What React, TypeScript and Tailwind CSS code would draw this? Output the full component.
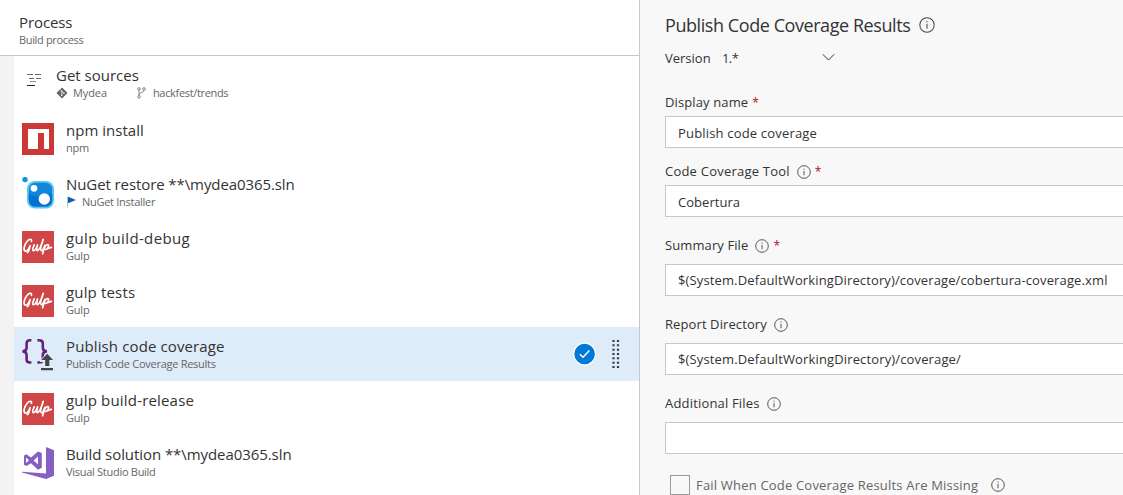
import type { ReactNode } from "react";

function InfoIcon({ size = 14 }: { size?: number }) {
  return (
    <svg width={size} height={size} viewBox="0 0 14 14" fill="none" stroke="#444" strokeWidth="0.9" className="shrink-0">
      <circle cx="7" cy="7" r="6.3" />
      <path d="M7 5.9V10.3M7 3.6V4.7" />
    </svg>
  );
}

function SourcesIcon() {
  return (
    <svg width="16" height="14" viewBox="0 0 16 14" strokeWidth="1">
      <path d="M0 1.5H6M8 1.5H14M2 5.5H7M9 5.5H14" stroke="#6a6a6a" />
      <path d="M3 8.5H9" stroke="#8a8a8a" />
      <path d="M0 12.5H8" stroke="#222" />
    </svg>
  );
}

function GitIcon() {
  return (
    <svg width="12" height="12" viewBox="0 0 12 12" className="shrink-0">
      <rect x="2" y="2" width="8" height="8" rx="0.8" transform="rotate(45 6 6)" fill="#666" />
      <path d="M4.2 2.6L5.8 4.2V8.6M5.8 4.4L8 6.4" stroke="#fff" strokeWidth="0.7" fill="none" />
      <circle cx="5.8" cy="4.3" r="0.7" fill="#fff" />
      <circle cx="5.8" cy="8.3" r="0.7" fill="#fff" />
      <circle cx="8" cy="6.3" r="0.7" fill="#fff" />
    </svg>
  );
}

function BranchIcon() {
  return (
    <svg width="9" height="12" viewBox="0 0 9 12" fill="none" stroke="#777" strokeWidth="0.9" className="shrink-0">
      <circle cx="2" cy="2" r="1.3" />
      <circle cx="7" cy="2" r="1.3" />
      <circle cx="2" cy="9.8" r="1.3" />
      <path d="M2 3.3V8.5M7 3.3C7 6 2.4 5 2.1 7.6" />
    </svg>
  );
}

function NpmIcon() {
  return (
    <svg width="32" height="32" viewBox="0 0 32 32">
      <path fill="#cb3837" d="M0 0H32V32H0Z" />
      <path fill="#fff" d="M6 6H27V26H22V10H16V26H6Z" />
    </svg>
  );
}

function NugetIcon() {
  return (
    <svg width="32" height="32" viewBox="0 0 32 32">
      <circle cx="3" cy="2.6" r="2.7" fill="#0a95dc" />
      <rect x="5" y="4" width="27" height="27.5" rx="8" fill="#5cc8f2" />
      <rect x="6.8" y="5.8" width="23.4" height="23.8" rx="6.5" fill="#0f86da" />
      <path fill="#0570cf" d="M6.8 17C13 22 22 18 30.2 17V23a6.5 6.5 0 0 1-6.5 6.6H13.3A6.5 6.5 0 0 1 6.8 23Z" />
      <circle cx="12" cy="11.3" r="3.4" fill="#fff" />
      <circle cx="22.3" cy="22" r="5.7" fill="#fff" />
    </svg>
  );
}

function GulpIcon() {
  return (
    <svg width="32" height="32" viewBox="0 0 32 32">
      <path fill="#cf4646" d="M0 0H32V32H0Z" />
      <g fill="none" stroke="#fff" strokeWidth="1.7" strokeLinecap="round" strokeLinejoin="round">
        <path d="M9.4 10.3C10 7.6 7.4 7.6 5.2 10.2C2.4 13.4 1 19 3 20C5 20.8 7.2 17.6 8.1 14.6C7.4 18.6 6.6 21.4 5.4 21.6" />
        <path d="M12.2 13.8C11 16.6 10.2 19.4 11.4 19.7C12.8 20 14.6 16.6 15.6 14C14.8 16.8 14.2 19.6 15.2 19.7C17.4 19.8 20.4 12 21.2 8.3C19.8 12.4 18 19.2 19.2 19.7C20.4 20 21.8 17.4 23 14.4L20.6 22.8" />
        <path d="M22.6 16.2C24 13.6 26.6 12.6 26.6 14.6C26.6 17 24.4 18.8 22.8 18.2C24.6 18.8 27 17 29.4 16.4" />
      </g>
    </svg>
  );
}

function CoverageIcon() {
  return (
    <svg width="32" height="32" viewBox="0 0 32 32">
      <g fill="none" stroke="#68217a" strokeWidth="2.6">
        <path d="M9.4 1.3H8C5.4 1.3 4.6 2.4 4.6 4.4V8.6C4.6 11 3.8 12.3 0.4 12.4C3.8 12.5 4.6 13.8 4.6 16.2V20.4C4.6 22.4 5.4 23.5 8 23.5H9.4" />
        <path d="M15.4 1.3H17C19.6 1.3 20.8 2.4 20.8 4.4V8.6C20.8 11 21.8 12.3 25 12.4C21.8 12.5 20.8 13.8 20.8 16.2V20.4C20.8 22.4 19.6 23.5 17 23.5H15.4" />
      </g>
      <path fill="#deebf9" d="M25.2 13.6L18 21.2V23H22V27.5H31V13.6Z" />
      <path fill="#444" d="M25.2 14.8L31 21H27.3V27H23.2V21H19.2ZM19 29H31V31.2H19Z" />
    </svg>
  );
}

function VisualStudioIcon() {
  return (
    <svg width="32" height="32" viewBox="0 0 32 32">
      <path fill="#865fc5" d="M24 0L32 3.2V28.8L24 32L0 25.4V24.8L24 26.6Z" />
      <path fill="#865fc5" fillRule="evenodd" d="M16 4.4L19.8 6V20.8L16 22.8L9 16.2L4.4 19L2 17.8V8.4L4.4 7.2L9 10.6ZM4 10.6V16L7 13.3ZM11.6 13.4L16 17.2V9.6Z" />
    </svg>
  );
}

type Row = {
  title: string;
  sub: string;
  icon: ReactNode;
  titleClass: string;
  subClass: string;
  flag?: boolean;
  selected?: boolean;
};

const rows: Row[] = [
  { title: "npm install", sub: "npm", icon: <NpmIcon />, titleClass: "tracking-[0.02px]", subClass: "tracking-[-0.3px]" },
  { title: "NuGet restore **\\mydea0365.sln", sub: "NuGet Installer", icon: <NugetIcon />, titleClass: "tracking-[-0.09px]", subClass: "tracking-[-0.28px]", flag: true },
  { title: "gulp build-debug", sub: "Gulp", icon: <GulpIcon />, titleClass: "tracking-[0.36px]", subClass: "tracking-[-0.2px]" },
  { title: "gulp tests", sub: "Gulp", icon: <GulpIcon />, titleClass: "tracking-[0.16px]", subClass: "tracking-[-0.2px]" },
  { title: "Publish code coverage", sub: "Publish Code Coverage Results", icon: <CoverageIcon />, titleClass: "tracking-[0.12px]", subClass: "tracking-[-0.27px]", selected: true },
  { title: "gulp build-release", sub: "Gulp", icon: <GulpIcon />, titleClass: "tracking-[0.18px]", subClass: "tracking-[-0.2px]" },
  { title: "Build solution **\\mydea0365.sln", sub: "Visual Studio Build", icon: <VisualStudioIcon />, titleClass: "tracking-[-0.07px]", subClass: "tracking-[-0.28px]" },
];

function SelectedMarks() {
  return (
    <div className="mr-[18px] ml-auto flex items-center gap-[15px] self-center">
      <svg width="24" height="24" viewBox="0 0 24 24">
        <circle cx="11.6" cy="12" r="10.9" fill="#0078d7" stroke="#fff" strokeWidth="1.2" />
        <path d="M6.9 12.2L10 15.2L16.4 8.6" fill="none" stroke="#fff" strokeWidth="1.5" />
      </svg>
      <svg width="9" height="28" viewBox="0 0 9 28">
        <path d="M1.5 0V28M6 0V28" stroke="#3b3a4a" strokeWidth="2.2" strokeDasharray="2 2.33" />
      </svg>
    </div>
  );
}

function TaskRow({ row }: { row: Row }) {
  return (
    <div className={`flex h-[54px] shrink-0 pl-2 ${row.selected ? "bg-[#deebf9]" : ""}`}>
      <div className="mt-3 mr-3 size-8">{row.icon}</div>
      <div className="pt-[9px]">
        <div className={`text-[15px] leading-5 text-[#333] ${row.titleClass}`}>{row.title}</div>
        <div className="flex items-center text-[11px] leading-4 text-[#666]">
          {row.flag && (
            <svg width="16" height="12" viewBox="0 0 16 12">
              <path d="M1.5 0.5V11.5" stroke="#9ccbe8" strokeWidth="1" />
              <path fill="#0e5ca3" d="M2 0.8L10 4L2 7.2Z" />
            </svg>
          )}
          <span className={row.subClass}>{row.sub}</span>
        </div>
      </div>
      {row.selected && <SelectedMarks />}
    </div>
  );
}

type FieldProps = {
  label: string;
  labelClass: string;
  value?: string;
  valueClass?: string;
  info?: boolean;
  required?: boolean;
  gap: string;
};

function Field({ label, labelClass, value, valueClass = "", info, required, gap }: FieldProps) {
  return (
    <div className={`flex flex-col ${gap}`}>
      <div className="flex h-[18px] items-center leading-[18px]">
        <span className={labelClass}>{label}</span>
        {info && <span className="ml-[7px] pt-px"><InfoIcon /></span>}
        {required && <span className="ml-[4px] pt-px text-[12px] text-[#a80f22]">*</span>}
      </div>
      <div className="flex h-8 items-center border border-r-0 border-[#c8c8c8] bg-white pl-3 leading-[18px]">
        <span className={valueClass}>{value}</span>
      </div>
    </div>
  );
}

export default function App() {
  return (
    <div className="flex h-[495px] w-[1123px] overflow-hidden bg-white font-['Open_Sans',sans-serif] whitespace-nowrap text-[#333]">
      <div className="flex w-[639px] shrink-0 flex-col">
        <div className="h-14 shrink-0 border-b border-[#c8c8c8] pt-3 pl-[19px]">
          <div className="text-[15px] leading-5 tracking-[-0.1px]">Process</div>
          <div className="text-[11px] leading-4 tracking-[-0.34px] text-[#666]">Build process</div>
        </div>
        <div className="flex min-h-0 flex-1">
          <div className="w-[14px] shrink-0 bg-[#f3f3f3]" />
          <div className="flex flex-1 flex-col">
            <div className="flex h-[55px] shrink-0 pt-[9px] pl-[13px]">
              <div className="mt-2 mr-[13px] w-4"><SourcesIcon /></div>
              <div>
                <div className="text-[15px] leading-5">Get sources</div>
                <div className="flex items-center text-[11px] leading-4 text-[#666]">
                  <GitIcon />
                  <span className="mr-[30px] ml-[5px] tracking-[-0.1px]">Mydea</span>
                  <BranchIcon />
                  <span className="ml-[7px] tracking-[-0.33px]">hackfest/trends</span>
                </div>
              </div>
            </div>
            {rows.map((row) => (
              <TaskRow key={row.title} row={row} />
            ))}
          </div>
        </div>
      </div>

      <div className="flex min-w-0 flex-1 flex-col border-l border-[#c8c8c8] bg-[#f8f8f8] pt-[13px] pl-[25px] text-[13px]">
        <div className="flex h-6 items-center gap-[9px] leading-6">
          <h1 className="text-[18px] font-normal tracking-[-0.43px]">Publish Code Coverage Results</h1>
          <InfoIcon size={16} />
        </div>
        <div className="mt-3 flex h-[18px] items-center leading-[18px]">
          <span className="w-[57px]">Version</span>
          <span className="w-[100px] tracking-[-0.6px]">1.*</span>
          <svg width="13" height="8" viewBox="0 0 13 8" fill="none" stroke="#333" strokeWidth="1">
            <path d="M0.8 0.3L6.5 6L12.2 0.3" />
          </svg>
        </div>
        <div className="mt-[26px] flex flex-col">
          <Field label="Display name" labelClass="tracking-[0.12px]" value="Publish code coverage" valueClass="pt-0.5 tracking-[0.18px]" required gap="gap-[5px]" />
          <div className="mt-[14px]">
            <Field label="Code Coverage Tool" labelClass="tracking-[0.22px]" value="Cobertura" valueClass="pt-0.5 tracking-[0.04px]" info required gap="gap-[5px]" />
          </div>
          <div className="mt-[19px]">
            <Field label="Summary File" labelClass="tracking-[0.1px]" value="$(System.DefaultWorkingDirectory)/coverage/cobertura-coverage.xml" valueClass="tracking-[0.13px]" info required gap="gap-[10px]" />
          </div>
          <div className="mt-[19px]">
            <Field label="Report Directory" labelClass="tracking-[0.1px]" value="$(System.DefaultWorkingDirectory)/coverage/" valueClass="tracking-[0.14px]" info gap="gap-[10px]" />
          </div>
          <div className="mt-[19px]">
            <Field label="Additional Files" labelClass="tracking-[0.18px]" info gap="gap-[10px]" />
          </div>
        </div>
        <div className="mt-[21px] flex h-5 items-center pl-[5px] leading-[18px] text-[#666]">
          <span className="mr-[6px] size-5 border border-[#999] bg-[#f8f8f8]" />
          <span className="mr-[13px] tracking-[0.19px]">Fail When Code Coverage Results Are Missing</span>
          <InfoIcon />
        </div>
      </div>
    </div>
  );
}
